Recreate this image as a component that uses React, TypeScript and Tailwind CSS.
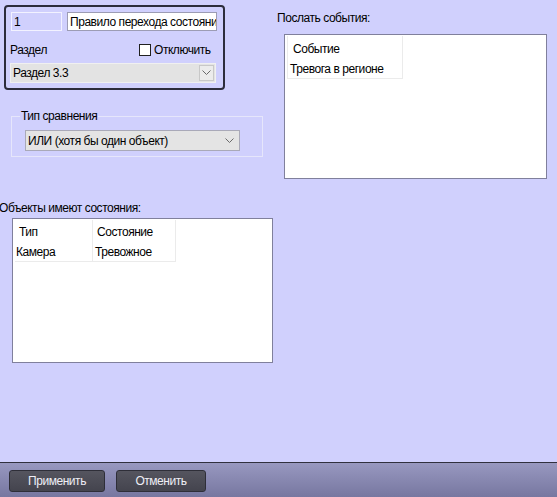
import React from "react";

const Chevron = () => (
  <svg width="9" height="6" viewBox="0 0 9 6">
    <polyline points="0.5,0.5 4.5,4.5 8.5,0.5" fill="none" stroke="#6a6a6a" strokeWidth="1" />
  </svg>
);

export default function App() {
  return (
    <div
      className="w-[557px] h-[497px] flex flex-col bg-[#d0d0fd] text-[12px] tracking-[-0.45px] text-black overflow-hidden"
      style={{ fontFamily: '"Liberation Sans", Arial, sans-serif' }}
    >
      <div className="h-[462px] flex flex-row">
        {/* Left column */}
        <div className="w-[275px] flex flex-col">
          {/* Top panel */}
          <div className="ml-[4px] mt-[5px] w-[221px] h-[85px] border-2 border-[#2c2c3c] rounded-[4px] flex flex-col">
            <div className="mt-[5px] ml-[5px] flex gap-[5px]">
              <div className="w-[51px] h-[19px] border border-[#f2f2ff] bg-[#d0d0fd] flex items-center pl-[2px] leading-none">
                1
              </div>
              <div className="w-[150px] h-[19px] border border-[#9c9cb4] bg-white flex items-center pl-[2px] leading-none whitespace-nowrap overflow-hidden">
                Правило перехода состояни
              </div>
            </div>
            <div className="mt-[12px] ml-[4px] h-[13px] flex items-center">
              <span className="w-[129px] leading-none">Раздел</span>
              <span className="w-[12px] h-[12px] border border-[#202020] bg-white" />
              <span className="ml-[3px] leading-none">Отключить</span>
            </div>
            <div className="mt-[7px] ml-[4px] w-[206px] h-[20px] border border-[#f0f0f0] bg-[#e3e3e3] flex items-center">
              <span className="pl-[2px] flex-1 leading-none">Раздел 3.3</span>
              <span className="w-[15px] h-[16px] mr-[1px] border border-[#c8c8c8] bg-[#ececec] flex items-center justify-center">
                <Chevron />
              </span>
            </div>
          </div>

          {/* Group box */}
          <fieldset className="mt-[19px] ml-[11px] w-[252px] border border-[#e6e6fb] pl-[8px] pb-[5px]">
            <legend className="px-[1px] leading-[14px]">Тип сравнения</legend>
            <div className="mt-[7px] ml-[5px] w-[215px] h-[21px] border border-[#a9a9b8] bg-[#e4e4e4] flex items-center">
              <span className="pl-[2px] flex-1 leading-none">ИЛИ (хотя бы один объект)</span>
              <span className="mr-[5px] flex items-center">
                <Chevron />
              </span>
            </div>
          </fieldset>

          <div className="mt-[44px] ml-[-1px] leading-[14px] whitespace-nowrap">Объекты имеют состояния:</div>
          <div className="mt-[3px] ml-[12px] w-[261px] h-[145px] border border-[#80809c] bg-white pl-[2px] pt-[1px]">
            <div className="grid grid-cols-[78px_83px] w-[161px]">
              <div className="h-[21px] border-r border-[#ebebeb] flex items-center pl-[4px] pt-[3px] leading-none">Тип</div>
              <div className="h-[21px] border-r border-[#ebebeb] flex items-center pl-[4px] pt-[3px] leading-none">Состояние</div>
              <div className="h-[21px] border-r border-b border-[#ebebeb] flex items-center pl-[1px] pt-[2px] leading-none">Камера</div>
              <div className="h-[21px] border-r border-b border-[#ebebeb] flex items-center pl-[2px] pt-[2px] leading-none">Тревожное</div>
            </div>
          </div>
        </div>

        {/* Right column */}
        <div className="flex flex-col">
          <div className="mt-[11px] ml-[2px] leading-[14px] whitespace-nowrap">Послать события:</div>
          <div className="mt-[9px] ml-[9px] w-[263px] h-[145px] border border-[#80809c] bg-white pl-[2px] pt-[1px]">
            <div className="w-[116px] border-r border-b border-l border-[#ebebeb] flex flex-col">
              <div className="h-[22px] flex items-center pl-[5px] pt-[3px] leading-none">Событие</div>
              <div className="h-[20px] flex items-center pl-[2px] pt-[1px] leading-none whitespace-nowrap">Тревога в регионе</div>
            </div>
          </div>
        </div>
      </div>

      {/* Bottom bar */}
      <div className="h-[35px] border-t border-[#30303e] bg-gradient-to-b from-[#9898c0] to-[#7777a0] flex items-start pl-[9px] gap-[11px]">
        <button className="mt-[7px] w-[96px] h-[22px] rounded-[3px] border border-[#2e2e38] bg-gradient-to-b from-[#55555f] to-[#44444e] text-[#eeeef6] text-[12px] tracking-[-0.45px] leading-none">
          Применить
        </button>
        <button className="mt-[7px] w-[90px] h-[22px] rounded-[3px] border border-[#2e2e38] bg-gradient-to-b from-[#55555f] to-[#44444e] text-[#eeeef6] text-[12px] tracking-[-0.45px] leading-none">
          Отменить
        </button>
      </div>
    </div>
  );
}
